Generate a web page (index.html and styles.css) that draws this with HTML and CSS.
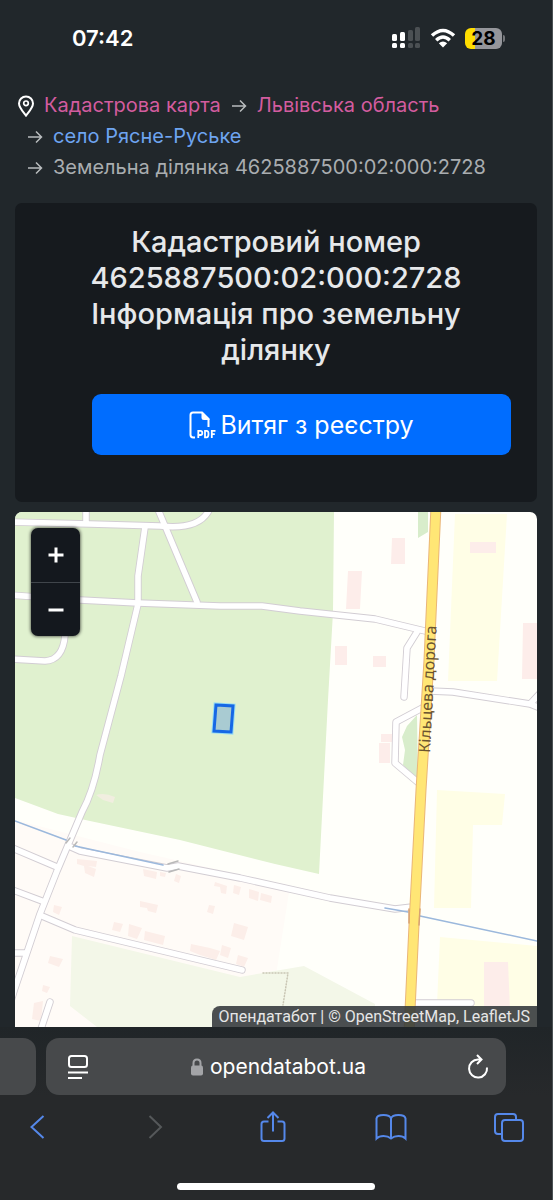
FILE: index.html
```html
<!DOCTYPE html>
<html lang="uk">
<head>
<meta charset="utf-8">
<meta name="viewport" content="width=device-width, initial-scale=1">
<title>Кадастровий номер 4625887500:02:000:2728</title>
<link rel="stylesheet" href="styles.css">
</head>
<body>
<div class="screen">
  <header class="status">
    <time class="status-time">07:42</time>
    <div class="status-icons">
      <svg width="29" height="22" viewBox="0 0 29 22" aria-hidden="true">
        <g fill="#fff"><rect x="0" y="7" width="5" height="7" rx="1.5"/><rect x="8" y="5" width="5" height="9" rx="1.5"/><rect x="0" y="16" width="5" height="5" rx="1.5"/><rect x="8" y="16" width="5" height="5" rx="1.5"/></g>
        <g fill="#4b5053"><rect x="16" y="3" width="5" height="11" rx="1.5"/><rect x="23" y="0" width="5" height="14" rx="1.5"/><rect x="16" y="16" width="5" height="5" rx="1.5"/><rect x="23" y="16" width="5" height="5" rx="1.5"/></g>
      </svg>
      <svg width="26" height="20" viewBox="0 0 26 20" aria-hidden="true">
        <g fill="none" stroke="#fff" stroke-width="3.4"><path d="M2 7.6 Q13 -2.6 24 7.6"/><path d="M6.2 12.2 Q13 5.8 19.8 12.2"/></g>
        <path d="M13 19.5 L8.8 15.2 Q13 11.8 17.2 15.2 Z" fill="#fff"/>
      </svg>
      <span class="battery">28</span>
    </div>
  </header>

  <main class="page">
    <nav aria-label="Навігація">
      <ol class="crumbs">
        <li>
          <svg class="pin" width="18" height="22" viewBox="0 0 18 22" aria-hidden="true"><path d="M9 20.6 C6.5 17.3 2 12.4 2 8.4 A7 7 0 0 1 16 8.4 C16 12.4 11.5 17.3 9 20.6Z" fill="none" stroke="#fff" stroke-width="2"/><circle cx="9" cy="8.3" r="2.3" fill="none" stroke="#fff" stroke-width="1.7"/></svg>
          <a class="visited" href="#">Кадастрова карта</a>
        </li>
        <li><svg class="arrow" width="16" height="14" viewBox="0 0 16 14" aria-hidden="true"><path d="M1 7H14.5M9 1.5L14.5 7L9 12.5"/></svg><a class="visited" href="#">Львівська область</a></li>
        <li><svg class="arrow" width="16" height="14" viewBox="0 0 16 14" aria-hidden="true"><path d="M1 7H14.5M9 1.5L14.5 7L9 12.5"/></svg><a class="link" href="#">село Рясне-Руське</a></li>
        <li><svg class="arrow" width="16" height="14" viewBox="0 0 16 14" aria-hidden="true"><path d="M1 7H14.5M9 1.5L14.5 7L9 12.5"/></svg><span>Земельна ділянка 4625887500:02:000:2728</span></li>
      </ol>
    </nav>

    <section class="card">
      <h1>Кадастровий номер 4625887500:02:000:2728 Інформація про земельну ділянку</h1>
      <button class="extract" type="button">
        <svg width="27" height="28" viewBox="0 0 27 28" fill="none" stroke="#fff" aria-hidden="true"><path d="M6 26.5 H4.2 Q1.5 26.5 1.5 23.8 V4 Q1.5 1.5 4 1.5 H13 L19.5 8 V16" stroke-width="2"/><path d="M12.5 1 V6.5 Q12.5 9 15 9 H20.5 V8 L13.5 1Z" fill="#fff" stroke="none"/><path d="M9.3 27V19.8H11.5Q13.3 19.8 13.3 21.9T11.5 24H9.3M16 19.8V26.3H17.5Q19.5 26.3 19.5 23T17.5 19.8ZM22.8 27V19.8H26.5M22.8 23.2H25.8" stroke-width="1.8"/></svg>
        Витяг з реєстру
      </button>
    </section>

    <section class="map" aria-label="Карта">
      <svg class="tiles" viewBox="15 512 522 515" preserveAspectRatio="xMidYMid slice">
        <defs>
          <g id="roads">
            <path d="M10 522 L90 524 L160 526 Q197 530 208 512 L212 505 M86 507V523"/>
            <path d="M157 507 L165 526 L197 602"/>
            <path d="M145 527 L138 576 L138 604 L121 676 L100 755 Q94 790 82 812 L57 871 L40 914 L15 988 L10 1004"/>
            <path d="M10 595 L80 600 L138 603 L220 606 L262 606 L300 611 L375 619 L425 631"/>
            <path d="M10 659 L45 661 Q63 660 65 635"/>
            <path d="M417 632 L407 648 L404 697"/>
            <path d="M426 706 L396 722 L395 763 L421 785"/>
            <path d="M430 691 L453 692 L530 704 L545 710 M530 704 L545 688"/>
            <path d="M71 847 L80 851 L167 868 L178 866 L240 878 L330 898 L395 909 L412 907"/>
            <path d="M10 847 L57 867 M10 889 L42 901"/>
            <path d="M42 916 L75 930 L242 970"/>
            <path d="M10 953 H25 M50 1002 L40 1032 M412 1003 H471"/>
          </g>
        </defs>
        <rect x="15" y="512" width="522" height="515" fill="#fffffa"/>
        <!-- housing, fields, woodland -->
        <path d="M15 820 L140 852 L290 886 L276 975 L200 1027 H15Z" fill="#fffbf7"/>
        <path d="M15 512 H334 L333 612 L328 700 L319 874 L275 864 L180 840 L90 821 L58 814 L15 798Z" fill="#e0f1cf"/>
        <path d="M72 936 L240 977 L304 966 L375 1004 V1027 H97 L70 1006Z" fill="#f3f7e8"/>
        <path d="M418 512 H428 V532 L418 538Z M417 715 L407 726 L402 737 L405 750 L403 765 L418 779Z" fill="#d8edcb"/>
        <g fill="#fffee6"><path d="M455 514 H507 L497 681 H448Z"/><path d="M437 790 L505 794 L502 825 H473 L471 908 H434Z"/><path d="M440 937 L537 946 V1027 H436Z"/></g>
        <!-- large buildings -->
        <path fill="#fdedea" d="M392 538H405V564H391Z M348 571H362L360 609H346Z M335 646H347V665H335Z M373 656H386V667H373Z M470 542H496V553H470Z M523 623H537V679H522Z M381 734H393V742H381Z M379 743H390V763H379Z M484 962H508L510 1010H484Z"/>
        <!-- small houses -->
        <path fill="#fceee9" d="M77 859l20 2-1 6-8-1 8 3-2 8-9-4-1-7-7-2z M143 869l14 3-1 7-12-3z M160 872l6 1-1 4-5-1z M176 874l5 2-2 7-5-2z M215 882l12 4-1 8-5-1-1-6-6-1z M234 885l7 2-2 8-6-2z M249 889l10 3-1 9-9-3z M261 893l11 3-1 7-11-3z M140 901l18 4-2 8-8-2-1-3-7-1z M209 905l6 1-2 8-6-2z M234 923l14 4-4 13-13-4z M54 905l8 2-3 8-6-3z M114 922l9 2-3 8-8-2z M129 924l13 4-5 11-9-3z M145 931l20 5-2 9-19-5z M191 944l19 4 10 3-4 9-16-5-10-4z M222 945l9 3-3 10-8-3z M238 955l10 3-4 9-8-3z M50 956l13 3-4 8-11-4z M43 985l7 2-3 6-5-2z M34 1003l9-2-2 20-9-2z"/>
        <path d="M96 795 Q104 792 115 797 L113 803 L103 800Z" fill="#f1eee0"/>
        <g fill="none" stroke-linejoin="round" stroke-linecap="round">
          <use href="#roads" stroke="#d2cdd3" stroke-width="7.4"/>
          <use href="#roads" stroke="#fff" stroke-width="5.6"/>
          <!-- stream -->
          <path d="M15 821 L66 840 M75 846 L163 865 M385 908 L408 912 M420 916 L537 941" stroke="#9bb8dc" stroke-width="1.6"/>
          <!-- bridges -->
          <path d="M66 843 L70 838 M73 847 L77 842 M168 864 L178 861 M169 872 L179 869" stroke="#b9b9b9" stroke-width="1.5"/>
          <!-- ring road -->
          <path d="M436 506 L429 660 L421 790 L414 925 L409 1032" stroke="#eab677" stroke-width="11"/>
          <path d="M436 506 L429 660 L421 790 L414 925 L409 1032" stroke="#ffe675" stroke-width="9"/>
          <path d="M409 909 V923 M420 909 L419 925" stroke="#d7a273" stroke-width="1.5"/>
          <path d="M263 973 H288 L283 1005" stroke="#c9c6b4" stroke-width="1.5" stroke-dasharray="1 2"/>
        </g>
        <text class="road-name" transform="translate(430 753) rotate(-87)">Кільцева дорога</text>
        <path d="M216 705 L233 706 L231 732 L214 731Z" fill="#a9cbd2" stroke="#96dcf5" stroke-width="5"/>
        <path d="M216 705 L233 706 L231 732 L214 731Z" fill="#a9cbd2" stroke="#1768e5" stroke-width="3"/>
      </svg>
      <div class="zoom">
        <button type="button" aria-label="Наблизити"><svg width="16" height="16" viewBox="0 0 16 16"><path d="M8 0.5V15.5M0.5 8H15.5"/></svg></button>
        <button type="button" aria-label="Віддалити"><svg width="16" height="16" viewBox="0 0 16 16"><path d="M0.5 8H15.5"/></svg></button>
      </div>
      <div class="credit">Опендатабот | © OpenStreetMap, LeafletJS</div>
    </section>
  </main>

  <footer class="browser">
    <div class="tabs">
      <div class="prev-tab"></div>
      <div class="address">
        <button type="button" aria-label="Меню сторінки"><svg width="22" height="26" viewBox="0 0 22 26" fill="none" stroke="#fff" stroke-width="2"><rect x="2" y="2" width="18" height="11" rx="2.5"/><path d="M1 18.5H21M1 24H15"/></svg></button>
        <div class="url">
          <svg width="14" height="18" viewBox="0 0 14 18" aria-hidden="true"><rect x="1" y="7.5" width="12" height="10" rx="2" fill="#a3a4a7"/><path d="M3.5 8V5Q3.5 1.5 7 1.5T10.5 5V8" fill="none" stroke="#a3a4a7" stroke-width="2"/></svg>
          <span>opendatabot.ua</span>
        </div>
        <button type="button" aria-label="Оновити"><svg width="22" height="26" viewBox="0 0 22 26" fill="none" stroke="#fff" stroke-width="2"><path d="M14 5.5 H11 A9 9 0 1 0 20 13.5M10 1L14.5 5.5L10 10"/></svg></button>
      </div>
    </div>
    <div class="tools">
      <button type="button" aria-label="Назад"><svg width="30" height="32" viewBox="0 0 30 32"><path d="M20.500 5L8.500 16L20.500 27"/></svg></button>
      <button type="button" aria-label="Вперед"><svg class="off" width="30" height="32" viewBox="0 0 30 32"><path d="M9.500 5L21 16L9.500 27"/></svg></button>
      <button type="button" aria-label="Поділитися"><svg width="30" height="32" viewBox="0 0 30 32"><path d="M10.5 10.5H6Q3.500 10.500 3.500 13V27.500Q3.500 30 6 30H24Q26.500 30 26.500 27.500V13Q26.500 10.500 24 10.500H19.500M15 20.500V1.500M9.500 7L15 1.500L20.500 7"/></svg></button>
      <button type="button" aria-label="Закладки"><svg width="32" height="32" viewBox="0 0 32 32"><path d="M16 7.500Q15 4 8.500 4T1.500 7.500V27.500Q4 25 8.500 25T16 27.500Q19 25 23.500 25T30.500 27.500V7.500Q30 4 23.500 4T16 7.500V27.500"/></svg></button>
      <button type="button" aria-label="Вкладки"><svg width="30" height="32" viewBox="0 0 30 32"><rect x="8" y="9" width="21" height="21" rx="3"/><path d="M8 23H4Q1 23 1 20V6Q1 3 4 3H19Q22 3 22 6V9"/></svg></button>
    </div>
    <div class="home"></div>
  </footer>
</div>
</body>
</html>
```
FILE: styles.css
```css
* { box-sizing: border-box; }
body {
  margin: 0;
  background: #21272b;
  color: #e6e8ea;
  font-family: Inter, "Liberation Sans", sans-serif;
}
button {
  margin: 0;
  padding: 0;
  border: 0;
  background: none;
  color: inherit;
  font: inherit;
  display: flex;
  align-items: center;
  justify-content: center;
}
svg { display: block; flex: none; }
.screen {
  min-height: 100vh;
  display: flex;
  flex-direction: column;
  border-right: 1px solid #4a5154;
}
.status {
  height: 76px;
  padding: 0 50px 0 72px;
  display: flex;
  align-items: center;
  justify-content: space-between;
  color: #fff;
}
.status-time { font-size: 22px; font-weight: 600; }
.status-icons { display: flex; align-items: center; gap: 9px; }
.battery {
  position: relative;
  width: 37px;
  height: 21px;
  border-radius: 6px;
  background: linear-gradient(90deg, #fd0 28%, #95969b 28%);
  color: #000;
  font-size: 19px;
  font-weight: 700;
  line-height: 21px;
  text-align: center;
}
.battery::after {
  content: "";
  position: absolute;
  left: 38px;
  top: 7px;
  width: 2px;
  height: 7px;
  border-radius: 0 2px 2px 0;
  background: #75777b;
}
.page { padding: 14px 15px 0; }
.crumbs {
  list-style: none;
  margin: 0 0 20px;
  padding: 0 2px;
  display: flex;
  flex-wrap: wrap;
  font-size: 20px;
  line-height: 31px;
  color: #a9adb0;
}
.crumbs li { display: flex; align-items: center; }
.crumbs a { text-decoration: none; }
.crumbs .visited { color: #d35c9f; }
.crumbs .link { color: #6ea4f0; }
.pin { margin-right: 9px; }
.arrow {
  margin: 0 10px;
  fill: none;
  stroke: #b8bcbe;
  stroke-width: 1.5;
}
.card {
  padding: 21px 26px 47px;
  border-radius: 7px;
  background: #161a1e;
}
h1 {
  max-width: 420px;
  margin: 0 auto 26px;
  font-size: 29px;
  font-weight: 500;
  line-height: 36px;
  text-align: center;
}
.extract {
  width: calc(100% - 51px);
  height: 61px;
  margin-left: auto;
  gap: 4px;
  border-radius: 9px;
  background: #006dff;
  color: #fff;
  font-size: 25px;
}
.map {
  position: relative;
  margin-top: 10px;
  border-radius: 7px 7px 0 0;
  overflow: hidden;
}
.tiles { width: 100%; height: auto; }
.road-name {
  font-family: "Noto Sans", sans-serif;
  font-size: 16px;
  fill: #6b5430;
}
.zoom {
  position: absolute;
  left: 16px;
  top: 16px;
  width: 49px;
  border-radius: 7px;
  background: #14181e;
  box-shadow: 0 0 3px 1px rgba(0, 0, 0, 0.5);
}
.zoom button { width: 100%; height: 54px; }
.zoom button + button { border-top: 1px solid #40454b; }
.zoom path { fill: none; stroke: #fff; stroke-width: 3; }
.credit {
  position: absolute;
  right: 0;
  bottom: 0;
  padding: 0 7px 0 6px;
  border-radius: 8px 0 0 0;
  background: rgba(50, 55, 58, 0.88);
  color: #e6e6e6;
  font: 16px/21px Roboto, "Liberation Sans", sans-serif;
}
.browser {
  flex: 1;
  display: flex;
  flex-direction: column;
  padding-bottom: 10px;
  background: linear-gradient(#202528, #27292b 40%);
}
.tabs { display: flex; gap: 10px; padding: 11px 46px 0 0; }
.prev-tab { width: 36px; border-radius: 0 13px 13px 0; background: #47494b; }
.address {
  flex: 1;
  height: 57px;
  padding: 0 17px 0 21px;
  display: flex;
  align-items: center;
  justify-content: space-between;
  border-radius: 13px;
  background: #47494b;
  color: #fff;
}
.url { display: flex; align-items: center; gap: 6px; font-size: 21px; }
.tools {
  display: flex;
  justify-content: space-between;
  padding: 16px 28px 0 23px;
}
.tools svg { fill: none; stroke: #5588ea; stroke-width: 2; }
.tools .off { stroke: #55585a; }
.home {
  width: 36%;
  height: 7px;
  margin: auto auto 0;
  border-radius: 4px;
  background: #fff;
}
```
